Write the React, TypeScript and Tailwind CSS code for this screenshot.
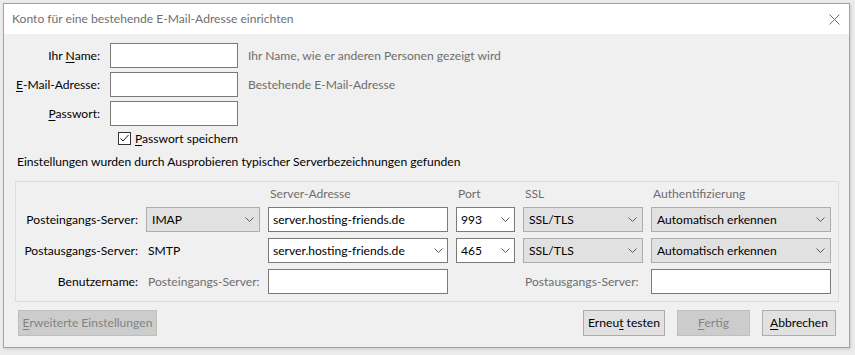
import React from "react";

const Chevron = () => (
  <svg width="9" height="5" viewBox="0 0 9 5" className="shrink-0">
    <polyline points="0.5,0.5 4.5,4.5 8.5,0.5" fill="none" stroke="#5a5a5a" strokeWidth="1" />
  </svg>
);

const U = ({ c }: { c: string }) => <span className="underline underline-offset-[2px]">{c}</span>;

const GraySelect = ({ text, w }: { text: string; w: string }) => (
  <div className={`${w} h-[25px] bg-[#e1e1e1] border border-[#adadad] flex items-center justify-between pl-[5px] pr-[5px] text-black`}>
    <span>{text}</span>
    <Chevron />
  </div>
);

const WhiteSelect = ({ text, w }: { text: string; w: string }) => (
  <div className={`${w} h-[25px] bg-white border border-[#7a7a7a] flex items-center justify-between pl-[4px] pr-[4px] text-black`}>
    <span>{text}</span>
    <Chevron />
  </div>
);

const Input = ({ w, text }: { w: string; text?: string }) => (
  <div className={`${w} h-[25px] bg-white border border-[#7a7a7a] flex items-center pl-[4px] text-black`}>
    {text}
  </div>
);

export default function App() {
  return (
    <div className="w-[855px] h-[355px] bg-[#ececec] pt-[3px] pl-[3px] font-['Lato','Noto_Sans',sans-serif] text-[12.1px] leading-[16px] text-black whitespace-nowrap">
      <div className="w-[847px] h-[345px] border border-[#a3a3a3] flex flex-col shadow-[1px_1px_3px_rgba(0,0,0,0.15)]">
        <div className="h-[30px] bg-white flex items-center justify-between pl-[8px] pr-[9px] shrink-0">
          <span className="text-[#6f6f6f]">Konto für eine bestehende E-Mail-Adresse einrichten</span>
          <svg width="11" height="11" viewBox="0 0 11 11">
            <line x1="0.5" y1="0.5" x2="10.5" y2="10.5" stroke="#707070" strokeWidth="1" />
            <line x1="10.5" y1="0.5" x2="0.5" y2="10.5" stroke="#707070" strokeWidth="1" />
          </svg>
        </div>
        <div className="flex-1 bg-[#f0f0f0] flex flex-col">
          <div className="mt-[9px] grid grid-cols-[96px_128px_auto] gap-x-[10px] gap-y-[4px] items-center">
            <div className="text-right">Ihr <U c="N" />ame:</div>
            <Input w="w-[128px]" />
            <div className="text-[#6d6d6d]">Ihr Name, wie er anderen Personen gezeigt wird</div>
            <div className="text-right"><U c="E" />-Mail-Adresse:</div>
            <Input w="w-[128px]" />
            <div className="text-[#6d6d6d]">Bestehende E-Mail-Adresse</div>
            <div className="text-right"><U c="P" />asswort:</div>
            <Input w="w-[128px]" />
            <div />
          </div>
          <div className="mt-[6px] ml-[110px] pl-[4px] flex items-center gap-[4px] h-[13px]">
            <div className="w-[13px] h-[13px] border border-[#333] bg-white flex items-center justify-center">
              <svg width="11" height="11" viewBox="0 0 11 11">
                <polyline points="1.5,5.5 4,8 9.5,2" fill="none" stroke="#222" strokeWidth="1" />
              </svg>
            </div>
            <span><U c="P" />asswort speichern</span>
          </div>
          <div className="mt-[9px] pl-[13px]">Einstellungen wurden durch Ausprobieren typischer Serverbezeichnungen gefunden</div>
          <div className="mt-[11px] ml-[11px] w-[824px] border border-[#dcdcdc] pt-[4px] pb-[7px]">
            <div className="grid grid-cols-[122px_114px_180px_59px_120px_180px] gap-x-[8px] gap-y-[6px] items-center">
              <div />
              <div />
              <div className="pl-[2px] text-[#6d6d6d] h-[18px] -mb-[3px]">Server-Adresse</div>
              <div className="pl-[2px] text-[#6d6d6d] h-[18px] -mb-[3px]">Port</div>
              <div className="pl-[2px] text-[#6d6d6d] h-[18px] -mb-[3px]">SSL</div>
              <div className="pl-[2px] text-[#6d6d6d] h-[18px] -mb-[3px]">Authentifizierung</div>

              <div className="text-right">Posteingangs-Server:</div>
              <GraySelect text="IMAP" w="w-[114px]" />
              <Input w="w-[180px]" text="server.hosting-friends.de" />
              <WhiteSelect text="993" w="w-[59px]" />
              <GraySelect text="SSL/TLS" w="w-[120px]" />
              <GraySelect text="Automatisch erkennen" w="w-[180px]" />

              <div className="text-right">Postausgangs-Server:</div>
              <div className="pl-[2px]">SMTP</div>
              <WhiteSelect text="server.hosting-friends.de" w="w-[180px]" />
              <WhiteSelect text="465" w="w-[59px]" />
              <GraySelect text="SSL/TLS" w="w-[120px]" />
              <GraySelect text="Automatisch erkennen" w="w-[180px]" />

              <div className="text-right">Benutzername:</div>
              <div className="pl-[2px] text-[#6d6d6d]">Posteingangs-Server:</div>
              <Input w="w-[180px]" />
              <div />
              <div className="pl-[2px] text-[#6d6d6d]">Postausgangs-Server:</div>
              <Input w="w-[180px]" />
            </div>
          </div>
          <div className="mt-[8px] pl-[14px] pr-[13px] flex items-center">
            <div className="w-[139px] h-[26px] bg-[#cccccc] border border-[#bfbfbf] flex items-center justify-center text-[#838383]">
              <span><U c="E" />rweiterte Einstellungen</span>
            </div>
            <div className="flex-1" />
            <div className="w-[82px] h-[26px] bg-[#e1e1e1] border border-[#adadad] flex items-center justify-center">
              <span>Erneu<U c="t" /> testen</span>
            </div>
            <div className="ml-[12px] w-[73px] h-[26px] bg-[#cccccc] border border-[#bfbfbf] flex items-center justify-center text-[#838383]">
              <span><U c="F" />ertig</span>
            </div>
            <div className="ml-[12px] w-[74px] h-[26px] bg-[#e1e1e1] border border-[#adadad] flex items-center justify-center">
              <span><U c="A" />bbrechen</span>
            </div>
          </div>
        </div>
      </div>
    </div>
  );
}
